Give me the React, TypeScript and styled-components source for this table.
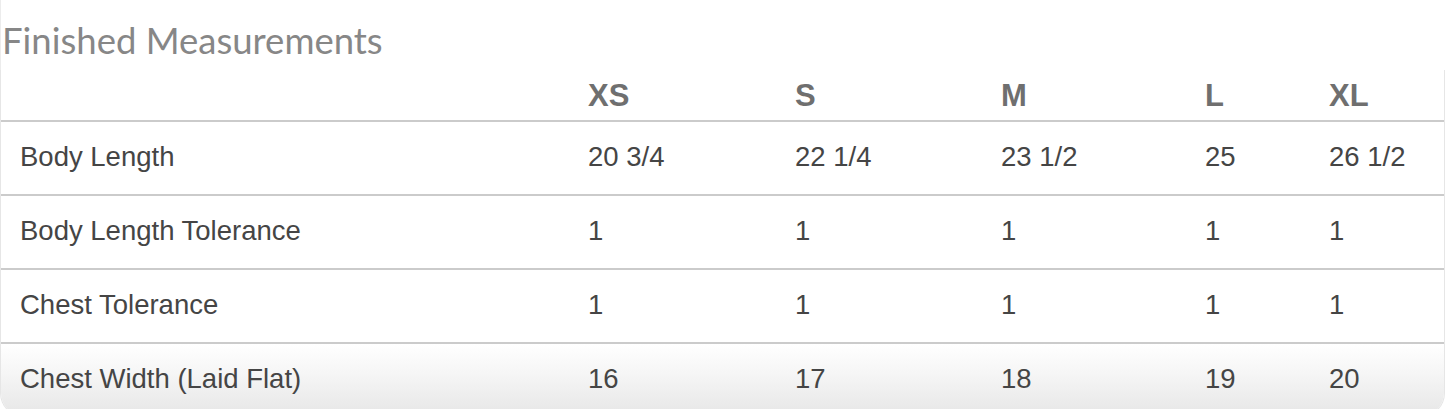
import React from "react";
import styled, { createGlobalStyle } from "styled-components";

const GlobalStyle = createGlobalStyle`
  html, body { margin: 0; padding: 0; background: #ffffff; }
  body { font-family: "Liberation Sans", Arial, sans-serif; overflow: hidden; }
`;

const Page = styled.div`
  width: 1445px;
  height: 409px;
  overflow: hidden;
`;

const Title = styled.h2`
  margin: 0;
  padding: 0 0 0 1px;
  height: 70px;
  font-family: Lato, "Open Sans", sans-serif;
  font-weight: 400;
  font-size: 36.5px;
  line-height: 80px;
  color: #878787;
  letter-spacing: 0;
  box-sizing: border-box;
  border-left: 1px solid #ececec;
`;

const Table = styled.div`
  border-left: 1px solid #e6e6e6;
  border-right: 1px solid #e6e6e6;
  border-bottom: 1px solid #dcdcdc;
  border-radius: 0 0 24px 24px;
  overflow: hidden;
`;

const COLS = "566px 207px 206px 204px 124px 1fr";

const HeaderRow = styled.div`
  display: grid;
  grid-template-columns: ${COLS};
  height: 50px;
  align-items: center;
`;

const HeadCell = styled.div`
  padding-left: 21px;
  font-weight: 700;
  font-size: 31px;
  color: #6f6f6f;
  line-height: 1;
`;

const Row = styled.div<{ $last?: boolean }>`
  display: grid;
  grid-template-columns: ${COLS};
  height: 74px;
  box-sizing: border-box;
  border-top: 2px solid #cbcbcb;
  align-items: center;
  background: ${(p) =>
    p.$last ? "linear-gradient(to bottom, #ffffff 0%, #f6f6f6 40%, #e6e6e6 100%)" : "#ffffff"};
`;

const Cell = styled.div<{ $label?: boolean }>`
  padding-left: ${(p) => (p.$label ? "19px" : "21px")};
  font-size: 27.5px;
  color: #454545;
  line-height: 1;
  padding-bottom: 2px;
`;

const sizes = ["XS", "S", "M", "L", "XL"];

const rows: { label: string; values: string[] }[] = [
  { label: "Body Length", values: ["20 3/4", "22 1/4", "23 1/2", "25", "26 1/2"] },
  { label: "Body Length Tolerance", values: ["1", "1", "1", "1", "1"] },
  { label: "Chest Tolerance", values: ["1", "1", "1", "1", "1"] },
  { label: "Chest Width (Laid Flat)", values: ["16", "17", "18", "19", "20"] },
];

export default function App() {
  return (
    <>
      <GlobalStyle />
      <Page>
        <Title>Finished Measurements</Title>
        <Table>
          <HeaderRow>
            <HeadCell />
            {sizes.map((s) => (
              <HeadCell key={s}>{s}</HeadCell>
            ))}
          </HeaderRow>
          {rows.map((r, i) => (
            <Row key={r.label} $last={i === rows.length - 1}>
              <Cell $label>{r.label}</Cell>
              {r.values.map((v, j) => (
                <Cell key={j}>{v}</Cell>
              ))}
            </Row>
          ))}
        </Table>
      </Page>
    </>
  );
}
